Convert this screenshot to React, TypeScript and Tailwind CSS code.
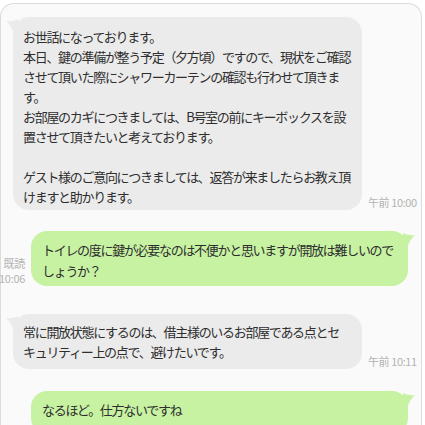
import React from 'react';

const font = { fontFamily: '"Noto Sans CJK JP", "Noto Sans", sans-serif' };

const GrayTail = () => (
  <svg className="absolute -left-[7px] top-[1px]" width="12" height="16" viewBox="0 0 12 16">
    <path d="M12 1 Q6 4 0 3 Q5 7 8 16 L12 16 Z" fill="#ebebeb" />
  </svg>
);

const GreenTail = () => (
  <svg className="absolute -right-[7px] top-[1px]" width="12" height="16" viewBox="0 0 12 16">
    <path d="M0 1 Q6 4 12 3 Q7 7 4 16 L0 16 Z" fill="#c7f2a2" />
  </svg>
);

const Lines = ({ lines }: { lines: string[] }) => (
  <>
    {lines.map((l, i) => (
      <div key={i} className="whitespace-nowrap">
        {l === '' ? '\u00a0' : l}
      </div>
    ))}
  </>
);

const Time = ({ text }: { text: string }) => (
  <div className="ml-[6px] mb-[1px] shrink-0 whitespace-nowrap text-[11px] leading-[14px] tracking-[-0.4px] text-[#b3b3b3]">{text}</div>
);

export default function App() {
  return (
    <div className="w-[425px] h-[425px] overflow-hidden bg-white pt-[3px]" style={font}>
      <div className="h-[440px] w-[422px] rounded-t-[14px] border border-b-0 border-[#dcdcdc] bg-[#fafafa] pt-[13px] text-[13px] tracking-[-1.3px] text-[#2e2e2e]">
        {/* incoming 1 */}
        <div className="flex items-end pl-[12px]">
          <div className="relative w-[349px] shrink-0 rounded-[16px] bg-[#ebebeb] pl-[10px] pt-[10px] pb-[3px] leading-[20px]">
            <GrayTail />
            <Lines
              lines={[
                'お世話になっております。',
                '本日、鍵の準備が整う予定（夕方頃）ですので、現状をご確認',
                'させて頂いた際にシャワーカーテンの確認も行わせて頂きま',
                'す。',
                'お部屋のカギにつきましては、B号室の前にキーボックスを設',
                '置させて頂きたいと考えております。',
                '',
                'ゲスト様のご意向につきましては、返答が来ましたらお教え頂',
                'けますと助かります。',
              ]}
            />
          </div>
          <Time text="午前 10:00" />
        </div>

        {/* outgoing 1 */}
        <div className="mt-[21px] flex items-end justify-end pr-[13px]">
          <div className="mr-[6px] shrink-0 text-right text-[11px] leading-[15px] tracking-[-0.3px] text-[#b3b3b3]">
            <div>既読</div>
            <div>10:06</div>
          </div>
          <div className="relative w-[377px] shrink-0 rounded-[16px] bg-[#c7f2a2] pl-[11px] pt-[8px] pb-[5px] leading-[21px]">
            <GreenTail />
            <Lines lines={['トイレの度に鍵が必要なのは不便かと思いますが開放は難しいので', 'しょうか？']} />
          </div>
        </div>

        {/* incoming 2 */}
        <div className="mt-[28px] flex items-end pl-[12px]">
          <div className="relative w-[349px] shrink-0 rounded-[16px] bg-[#ebebeb] pl-[10px] pt-[8px] pb-[7px] leading-[20px]">
            <GrayTail />
            <Lines lines={['常に開放状態にするのは、借主様のいるお部屋である点とセ', 'キュリティー上の点で、避けたいです。']} />
          </div>
          <Time text="午前 10:11" />
        </div>

        {/* outgoing 2 */}
        <div className="mt-[22px] flex items-end justify-end pr-[13px]">
          <div className="relative w-[377px] shrink-0 rounded-[16px] bg-[#c7f2a2] pl-[11px] pt-[8px] pb-[14px] leading-[21px]">
            <GreenTail />
            <Lines lines={['なるほど。仕方ないですね']} />
          </div>
        </div>
      </div>
    </div>
  );
}
